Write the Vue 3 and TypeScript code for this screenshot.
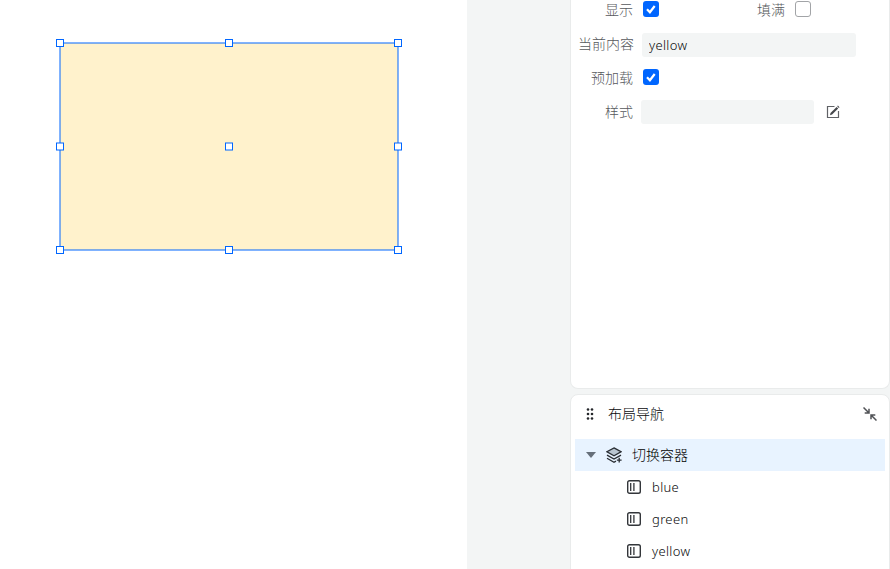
<script setup lang="ts">
import { computed, ref } from 'vue'

interface Box { x: number; y: number; w: number; h: number }

const box: Box = { x: 60, y: 43, w: 338, h: 207 }
const handles = computed(() => {
  const out: { x: number; y: number }[] = []
  for (const fy of [0, 0.5, 1]) {
    for (const fx of [0, 0.5, 1]) out.push({ x: box.x + box.w * fx, y: box.y + box.h * fy })
  }
  return out
})

const visible = ref(true)
const fill = ref(false)
const preload = ref(true)
const current = ref('yellow')
const styleText = ref('')
const children: string[] = ['blue', 'green', 'yellow']
</script>

<template>
  <div class="editor">
    <main class="canvas">
      <svg width="467" height="569">
        <rect class="frame" :x="box.x" :y="box.y" :width="box.w" :height="box.h" />
        <rect v-for="(p, i) in handles" :key="i" class="handle" :x="p.x - 3.5" :y="p.y - 3.5" width="7" height="7" />
      </svg>
    </main>
    <aside class="side">
      <section class="panel props">
        <div class="row row-show">
          <span class="label">显示</span>
          <button class="check" :class="{ on: visible }" @click="visible = !visible">
            <svg v-if="visible" viewBox="0 0 16 16"><path d="M4 8.2 6.9 11.2 11.7 5" /></svg>
          </button>
          <span class="label label-fill">填满</span>
          <button class="check" :class="{ on: fill }" @click="fill = !fill">
            <svg v-if="fill" viewBox="0 0 16 16"><path d="M4 8.2 6.9 11.2 11.7 5" /></svg>
          </button>
        </div>
        <div class="row row-current">
          <span class="label">当前内容</span>
          <input v-model="current" class="field" />
        </div>
        <div class="row row-preload">
          <span class="label">预加载</span>
          <button class="check" :class="{ on: preload }" @click="preload = !preload">
            <svg v-if="preload" viewBox="0 0 16 16"><path d="M4 8.2 6.9 11.2 11.7 5" /></svg>
          </button>
        </div>
        <div class="row row-style">
          <span class="label">样式</span>
          <input v-model="styleText" class="field short" />
          <svg class="edit" viewBox="0 0 14 14">
            <path d="M8.5 1.5H1.5V12.5H12.5V6" fill="none" stroke="#606266" stroke-width="1.2" />
            <path d="M4 10.2 4.5 8 10.6 1.9 12.2 3.5 6.1 9.6Z" fill="#45474b" />
            <path d="M11.2 1.3 11.9.6 13.5 2.2 12.8 2.9Z" fill="#45474b" />
          </svg>
        </div>
      </section>
      <section class="panel nav">
        <header class="head">
          <svg class="grip" viewBox="0 0 8 14">
            <g fill="#25272b">
              <circle v-for="n in 6" :key="n" :cx="n % 2 ? 2 : 6" :cy="2.5 + Math.floor((n - 1) / 2) * 4.5" r="1.3" />
            </g>
          </svg>
          <span>布局导航</span>
          <svg class="collapse" viewBox="0 0 14 14" fill="none" stroke="#505256" stroke-width="1.5">
            <path d="M.5.5 5.5 5.5M6 1.7V6H1.7M13.5 13.5 8.5 8.5M8 12.3V8H12.3" />
          </svg>
        </header>
        <div class="node selected">
          <svg class="arrow" viewBox="0 0 10 6"><path d="M0 0H10L5 6Z" fill="#666f7a" /></svg>
          <svg class="layers" viewBox="0 0 16 16" fill="none" stroke="#292d33" stroke-width="1.3">
            <path d="M8 .9 15 4.8 8 8.7 1 4.8Z" fill="#b9c5d1" />
            <path d="M1 8.1 8 12 15 8.1M1 11.3 8 15.2 10 14.1M13.2 10.8V15.6M10.8 13.2H15.6" />
          </svg>
          <span>切换容器</span>
        </div>
        <div v-for="name in children" :key="name" class="node child">
          <svg class="pane" viewBox="0 0 14 14" fill="none" stroke="#33363a">
            <rect x=".7" y=".7" width="12.6" height="12.6" rx="1.8" stroke-width="1.4" />
            <path d="M3.7 3V11M6.9 3V11" stroke-width="1.3" />
          </svg>
          <span>{{ name }}</span>
        </div>
      </section>
    </aside>
  </div>
</template>

<style>
body { overflow: hidden; }
</style>

<style scoped>
* { box-sizing: border-box; }
svg { display: block; flex: none; }
.editor {
  display: flex;
  width: 890px;
  height: 569px;
  overflow: hidden;
  background: #f3f5f5;
  color: #08090b;
  font: 14px/20px "Noto Sans", "Noto Sans CJK SC", sans-serif;
  font-weight: 300;
}
.canvas { width: 467px; background: #fff; }
.frame { fill: #fff2cc; stroke: #0066ff; stroke-width: 1; }
.handle { fill: #fff; stroke: #0066ff; stroke-width: 1; }
.side { display: flex; flex-direction: column; gap: 5px; width: 320px; margin-left: 103px; }
.panel { flex: none; background: #fff; border: 1px solid #e9ebeb; }
.props { height: 389px; border-top: 0; border-radius: 0 0 8px 8px; }
.nav { height: 190px; border-radius: 8px 8px 0 0; padding: 0 4px; }
.row { display: flex; align-items: center; height: 24px; }
.row-show { height: 20px; }
.row-current { margin-top: 13px; }
.row-preload { margin-top: 8px; }
.row-style { margin-top: 11px; }
.label { width: 63px; text-align: right; color: #56585c; white-space: nowrap; }
.row-current .label { padding-bottom: 2px; }
.row-preload .label { padding-top: 2px; }
.row-show .label, .row-preload .label, .row-style .label { width: 62px; }
.check {
  display: block;
  width: 16px;
  height: 16px;
  margin: 0 0 1px 10px;
  padding: 0;
  border: 1px solid #a2a4a7;
  border-radius: 3px;
  background: #fff;
}
.row-show .check { margin-bottom: 2px; }
.check.on { border: 0; background: #0066ff; }
.check path { fill: none; stroke: #fff; stroke-width: 2.2; }
.row-show .label-fill { width: 126px; }
.field {
  width: 214px;
  height: 24px;
  margin-left: 8px;
  padding: 0 7px;
  border: 0;
  outline: 0;
  border-radius: 3px;
  background: #f3f5f5;
  color: #08090b;
  font: 300 13px/20px "Noto Sans", sans-serif;
  letter-spacing: 0.35px;
}
.field.short { width: 173px; }
.edit { width: 14px; height: 14px; margin-left: 12px; }
.head { display: flex; align-items: center; height: 38px; margin-bottom: 6px; padding: 0 8px 0 11px; }
.grip { width: 8px; height: 14px; margin-right: 14px; }
.collapse { width: 14px; height: 14px; margin-left: auto; }
.node { display: flex; align-items: center; height: 32px; }
.selected { padding-left: 11px; background: #e8f3ff; color: #000; }
.arrow { width: 10px; height: 6px; margin-right: 10px; }
.layers { width: 16px; height: 16px; margin-right: 10px; }
.child { padding-left: 52px; font-size: 13px; letter-spacing: 0.35px; }
.pane { width: 14px; height: 14px; margin-right: 11px; }
</style>
